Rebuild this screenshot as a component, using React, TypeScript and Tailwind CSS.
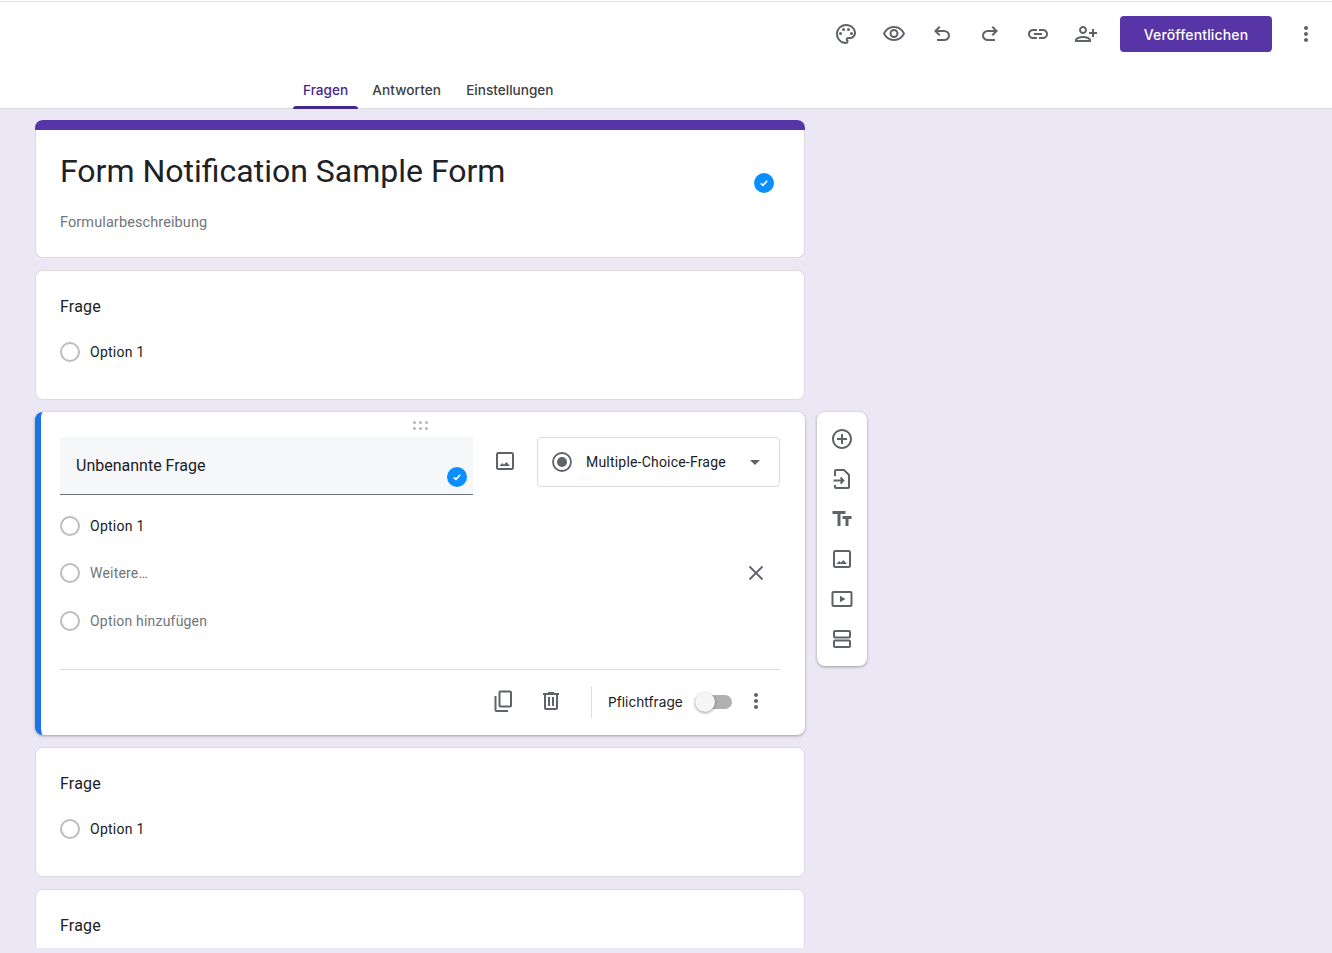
import type { ReactNode } from "react";

const G = "#5f6368";

function Icon({ size = 24, children, box = "0 0 24 24" }: { size?: number; children: ReactNode; box?: string }) {
  return (
    <svg width={size} height={size} viewBox={box} fill={G} className="shrink-0 block">
      {children}
    </svg>
  );
}

const Palette = () => (
  <Icon>
    <path d="M12 22C6.49 22 2 17.51 2 12S6.49 2 12 2s10 4.04 10 9c0 3.31-2.69 6-6 6h-1.77c-.28 0-.5.22-.5.5 0 .12.05.23.13.33.41.47.64 1.06.64 1.67 0 1.38-1.12 2.5-2.5 2.5zm0-18c-4.41 0-8 3.59-8 8s3.59 8 8 8c.28 0 .5-.22.5-.5 0-.16-.08-.28-.14-.35-.41-.46-.63-1.05-.63-1.65 0-1.38 1.12-2.5 2.5-2.5H16c2.21 0 4-1.79 4-4 0-3.86-3.59-7-8-7z" />
    <circle cx="6.5" cy="11.5" r="1.5" />
    <circle cx="9.5" cy="7.5" r="1.5" />
    <circle cx="14.5" cy="7.5" r="1.5" />
    <circle cx="17.5" cy="11.5" r="1.5" />
  </Icon>
);
const Eye = () => (
  <Icon>
    <path d="M12 6c3.79 0 7.17 2.13 8.82 5.5C19.17 14.87 15.79 17 12 17s-7.17-2.13-8.82-5.5C4.83 8.13 8.21 6 12 6m0-2C7 4 2.73 7.11 1 11.5 2.73 15.89 7 19 12 19s9.27-3.11 11-7.5C21.27 7.11 17 4 12 4zm0 5c1.38 0 2.5 1.12 2.5 2.5S13.38 14 12 14s-2.5-1.12-2.5-2.5S10.62 9 12 9m0-2c-2.48 0-4.5 2.02-4.5 4.5S9.52 16 12 16s4.5-2.02 4.5-4.5S14.48 7 12 7z" />
  </Icon>
);
const Undo = () => (
  <Icon box="0 -960 960 960">
    <path d="M280-200v-80h284q63 0 109.5-40T720-420q0-60-46.5-100T564-560H312l104 104-56 56-200-200 200-200 56 56-104 104h252q97 0 166.5 63T800-420q0 94-69.5 157T564-200H280Z" />
  </Icon>
);
const Redo = () => (
  <Icon box="0 -960 960 960">
    <path d="M396-200q-97 0-166.5-63T160-420q0-94 69.5-157T396-640h252L544-744l56-56 200 200-200 200-56-56 104-104H396q-63 0-109.5 40T240-420q0 60 46.5 100T396-280h284v80H396Z" />
  </Icon>
);
const LinkIcon = () => (
  <Icon>
    <path d="M3.9 12c0-1.71 1.39-3.1 3.1-3.1h4V7H7c-2.76 0-5 2.24-5 5s2.24 5 5 5h4v-1.9H7c-1.71 0-3.1-1.39-3.1-3.1zM8 13h8v-2H8v2zm9-6h-4v1.9h4c1.71 0 3.1 1.39 3.1 3.1s-1.39 3.1-3.1 3.1h-4V17h4c2.76 0 5-2.24 5-5s-2.24-5-5-5z" />
  </Icon>
);
const PersonAdd = () => (
  <Icon>
    <g transform="translate(24 0) scale(-1 1)">
      <path d="M15 12c2.21 0 4-1.79 4-4s-1.79-4-4-4-4 1.79-4 4 1.79 4 4 4zm0-6c1.1 0 2 .9 2 2s-.9 2-2 2-2-.9-2-2 .9-2 2-2zm0 8c-2.67 0-8 1.34-8 4v2h16v-2c0-2.66-5.33-4-8-4zm-6 4c.22-.72 3.31-2 6-2 2.7 0 5.8 1.29 6 2H9zm-3-3v-3h3v-2H6V7H4v3H1v2h3v3h2z" />
    </g>
  </Icon>
);
const MoreVert = () => (
  <Icon>
    <path d="M12 8c1.1 0 2-.9 2-2s-.9-2-2-2-2 .9-2 2 .9 2 2 2zm0 2c-1.1 0-2 .9-2 2s.9 2 2 2 2-.9 2-2-.9-2-2-2zm0 6c-1.1 0-2 .9-2 2s.9 2 2 2 2-.9 2-2-.9-2-2-2z" />
  </Icon>
);
const AddCircle = () => (
  <Icon>
    <path d="M13 7h-2v4H7v2h4v4h2v-4h4v-2h-4V7zm-1-5C6.48 2 2 6.48 2 12s4.48 10 10 10 10-4.48 10-10S17.52 2 12 2zm0 18c-4.41 0-8-3.59-8-8s3.59-8 8-8 8 3.59 8 8-3.59 8-8 8z" />
  </Icon>
);
const ImportDoc = () => (
  <Icon>
    <path
      d="M5 9V4a1 1 0 0 1 1-1h8l5 5v12a1 1 0 0 1-1 1H6a1 1 0 0 1-1-1v-2"
      fill="none"
      stroke={G}
      strokeWidth="2"
    />
    <path d="M3.5 13.5h10M10.5 10.5l3 3-3 3" fill="none" stroke={G} strokeWidth="1.8" />
  </Icon>
);
const TitleIcon = () => (
  <Icon>
    <path d="M2.5 4v3h5v12h3V7h5V4h-13zm19 5h-9v3h3v7h3v-7h3V9z" />
  </Icon>
);
const ImageIcon = () => (
  <Icon>
    <rect x="4" y="4" width="16" height="16" rx="1.5" fill="none" stroke={G} strokeWidth="2" />
    <path d="M6.5 17l2.7-2.9 1.8 1.6 2.4-2.7 3.6 4z" />
  </Icon>
);
const VideoIcon = () => (
  <Icon>
    <rect x="2.5" y="5" width="19" height="14" rx="1" fill="none" stroke={G} strokeWidth="2" />
    <path d="M10 8.8v6.4l5.4-3.2z" />
  </Icon>
);
const SectionIcon = () => (
  <Icon>
    <rect x="4" y="4" width="16" height="6.5" rx="1" fill="none" stroke={G} strokeWidth="2" />
    <rect x="4" y="13.5" width="16" height="6.5" rx="1" fill="none" stroke={G} strokeWidth="2" />
  </Icon>
);
const CopyIcon = () => (
  <Icon>
    <rect x="8.5" y="2.5" width="11.5" height="15" rx="1" fill="none" stroke={G} strokeWidth="2" />
    <path d="M4.500 7v14a1 1 0 0 0 1 1h11.500" fill="none" stroke={G} strokeWidth="2" />
  </Icon>
);
const TrashIcon = () => (
  <Icon>
    <path d="M15 4V3H9v1H4v2h1v13c0 1.100.9 2 2 2h10c1.100 0 2-.9 2-2V6h1V4h-5zm2 15H7V6h10v13zM9 8h2v9H9zm4 0h2v9h-2z" />
  </Icon>
);

function CheckBadge() {
  return (
    <span className="flex h-5 w-5 items-center justify-center rounded-full bg-[#0a8fff]">
      <svg width="12" height="12" viewBox="0 0 12 12" fill="none" stroke="#fff" strokeWidth="1.7">
        <path d="M2.800 6.300l2.200 2.100 4.200-4.600" />
      </svg>
    </span>
  );
}

function Radio() {
  return <span className="h-5 w-5 shrink-0 rounded-full border-2 border-[#bdbdbd]" />;
}

function QuestionCard({ clipped }: { clipped?: boolean }) {
  return (
    <div
      className={
        clipped
          ? "h-[59px] shrink-0 overflow-hidden rounded-t-lg border border-b-0 border-[#dadce0] bg-white pl-6 pt-[26px]"
          : "h-[130px] shrink-0 rounded-lg border border-[#dadce0] bg-white pl-6 pt-[26px]"
      }
    >
      <div className="text-[16px] leading-[20px] tracking-[0.2px] text-[#202124]">Frage</div>
      {!clipped && (
        <div className="mt-[25px] flex items-center gap-2.5">
          <Radio />
          <span className="text-[14px] leading-5 tracking-[0.25px] text-[#202124]">Option 1</span>
        </div>
      )}
    </div>
  );
}

function OptionRow({ label, muted, trailing }: { label: string; muted?: boolean; trailing?: ReactNode }) {
  return (
    <div className="flex h-5 items-center gap-2.5">
      <Radio />
      <span
        className={
          muted
            ? "text-[14px] leading-5 tracking-[0.2px] text-[#70757a]"
            : "text-[14px] leading-5 tracking-[0.25px] text-[#202124]"
        }
      >
        {label}
      </span>
      {trailing}
    </div>
  );
}

function ActiveCard() {
  return (
    <div className="h-[323px] w-[770px] shrink-0 rounded-lg border-l-[6px] border-[#1a73e8] bg-white shadow-[0_1px_3px_rgba(60,64,67,0.45)]">
      <div className="flex h-[25px] items-end justify-center pb-[7px] pr-[6px]">
        <div className="grid grid-cols-3 gap-x-[3px] gap-y-[3px]">
          {[0, 1, 2, 3, 4, 5].map((i) => (
            <span key={i} className="h-[3px] w-[3px] rounded-full bg-[#b5b7ba]" />
          ))}
        </div>
      </div>
      <div className="flex items-start pl-[19px] pr-[25px]">
        <div className="relative h-[58px] w-[413px] border-b border-[#70757a] bg-[#f6f7f9] pl-4 pt-[19px]">
          <span className="block text-[16px] leading-5 text-[#202124]">Unbenannte Frage</span>
          <span className="absolute right-[6px] top-[30px]">
            <CheckBadge />
          </span>
        </div>
        <div className="ml-5 mt-3">
          <ImageIcon />
        </div>
        <div className="ml-5 flex h-[50px] w-[243px] items-center rounded border border-[#dadce0] pl-[13px]">
          <svg width="22" height="22" viewBox="0 0 22 22" className="mr-[13px] shrink-0">
            <circle cx="11" cy="11" r="9" fill="none" stroke={G} strokeWidth="1.800" />
            <circle cx="11" cy="11" r="5" fill={G} />
          </svg>
          <span className="text-[14px] leading-5 tracking-[0.2px] text-[#202124]">Multiple-Choice-Frage</span>
          <span className="ml-[24px] h-0 w-0 border-x-[5px] border-t-[5px] border-x-transparent border-t-[#5f6368]" />
        </div>
      </div>
      <div className="mt-[21px] flex flex-col pl-[19px] pr-[25px]">
        <OptionRow label="Option 1" />
        <div className="mt-[27px]">
          <OptionRow
            label="Weitere…"
            muted
            trailing={
              <svg width="24" height="24" viewBox="0 0 24 24" className="ml-auto mr-3 shrink-0" fill="none" stroke={G} strokeWidth="1.800">
                <path d="M5.500 5.500l13 13M18.500 5.500l-13 13" />
              </svg>
            }
          />
        </div>
        <div className="mt-[28px]">
          <OptionRow label="Option hinzufügen" muted />
        </div>
      </div>
      <div className="ml-[19px] mr-[25px] mt-[38px] flex h-[65px] items-center border-t border-[#dadce0] pr-3">
        <div className="mb-[3px] ml-[431px]">
          <CopyIcon />
        </div>
        <div className="mb-[3px] ml-6">
          <TrashIcon />
        </div>
        <span className="ml-[28px] h-8 w-px bg-[#dadce0]" />
        <span className="ml-4 font-['Inter','Liberation_Sans',sans-serif] text-[13.7px] leading-5 text-[#202124]">
          Pflichtfrage
        </span>
        <span className="relative ml-[12px] h-[14px] w-[37px] rounded-full bg-[#b0b0b0]">
          <span className="absolute left-0 top-[-3px] h-5 w-5 rounded-full bg-[#f5f5f5] shadow-[0_1px_3px_rgba(0,0,0,0.4)]" />
        </span>
        <span className="mb-[3px] ml-3">
          <MoreVert />
        </span>
      </div>
    </div>
  );
}

export default function App() {
  const tools = [Palette, Eye, Undo, Redo, LinkIcon, PersonAdd];
  const side = [AddCircle, ImportDoc, TitleIcon, ImageIcon, VideoIcon, SectionIcon];

  return (
    <div className="flex h-[953px] w-[1332px] flex-col overflow-hidden bg-[#ebe7f5] font-['Roboto','Liberation_Sans',sans-serif]">
      <header className="h-[109px] shrink-0 border-b border-[#dadce0] bg-white">
        <div className="mt-px h-px bg-[#e0e0e0]" />
        <div className="flex h-[66px] items-start justify-end pr-[14px] pt-[14px]">
          <div className="flex items-center gap-6 pt-1.5">
            {tools.map((T, i) => (
              <T key={i} />
            ))}
          </div>
          <button className="ml-[22px] h-9 w-[152px] rounded bg-[#5735a7] font-['Inter','Liberation_Sans',sans-serif] text-[14px] font-medium tracking-[0.14px] text-white">
            Veröffentlichen
          </button>
          <div className="ml-[22px] pt-1.5">
            <MoreVert />
          </div>
        </div>
        <nav className="ml-[293px] flex h-[41px] items-end font-['Inter','Liberation_Sans',sans-serif] text-[13.6px] font-medium leading-5 text-[#3c4043]">
          <div className="flex h-full flex-col justify-end">
            <span className="px-2.5 pb-[6px] text-[#45288f]">Fragen</span>
            <span className="h-[3px] rounded-t-[3px] bg-[#45288f]" />
          </div>
          <span className="ml-[14px] pb-[9px] tracking-[0.1px]">Antworten</span>
          <span className="ml-[25px] pb-[9px]">Einstellungen</span>
        </nav>
      </header>

      <main className="flex h-[839px] shrink-0 flex-col gap-3 overflow-hidden pl-[35px] pt-[11px]">
        <div className="w-[770px] shrink-0">
          <div className="h-[10px] rounded-t-lg bg-[#5735a7]" />
          <div className="flex h-[128px] justify-between rounded-b-lg border border-t-0 border-[#dadce0] bg-white pl-6 pr-[30px]">
            <div>
              <h1 className="mt-[21px] text-[32px] font-normal leading-10 text-[#202124]">Form Notification Sample Form</h1>
              <p className="mt-[22px] text-[14.5px] leading-5 tracking-[0.1px] text-[#70757a]">Formularbeschreibung</p>
            </div>
            <div className="mt-[43px]">
              <CheckBadge />
            </div>
          </div>
        </div>
        <div className="w-[770px] shrink-0">
          <QuestionCard />
        </div>
        <div className="flex shrink-0 items-start gap-3">
          <ActiveCard />
          <div className="flex h-[254px] w-[50px] flex-col items-center gap-4 rounded-lg bg-white pt-[15px] shadow-[0_1px_3px_rgba(60,64,67,0.45)]">
            {side.map((T, i) => (
              <T key={i} />
            ))}
          </div>
        </div>
        <div className="w-[770px] shrink-0">
          <QuestionCard />
        </div>
        <div className="w-[770px] shrink-0">
          <QuestionCard clipped />
        </div>
      </main>
    </div>
  );
}
